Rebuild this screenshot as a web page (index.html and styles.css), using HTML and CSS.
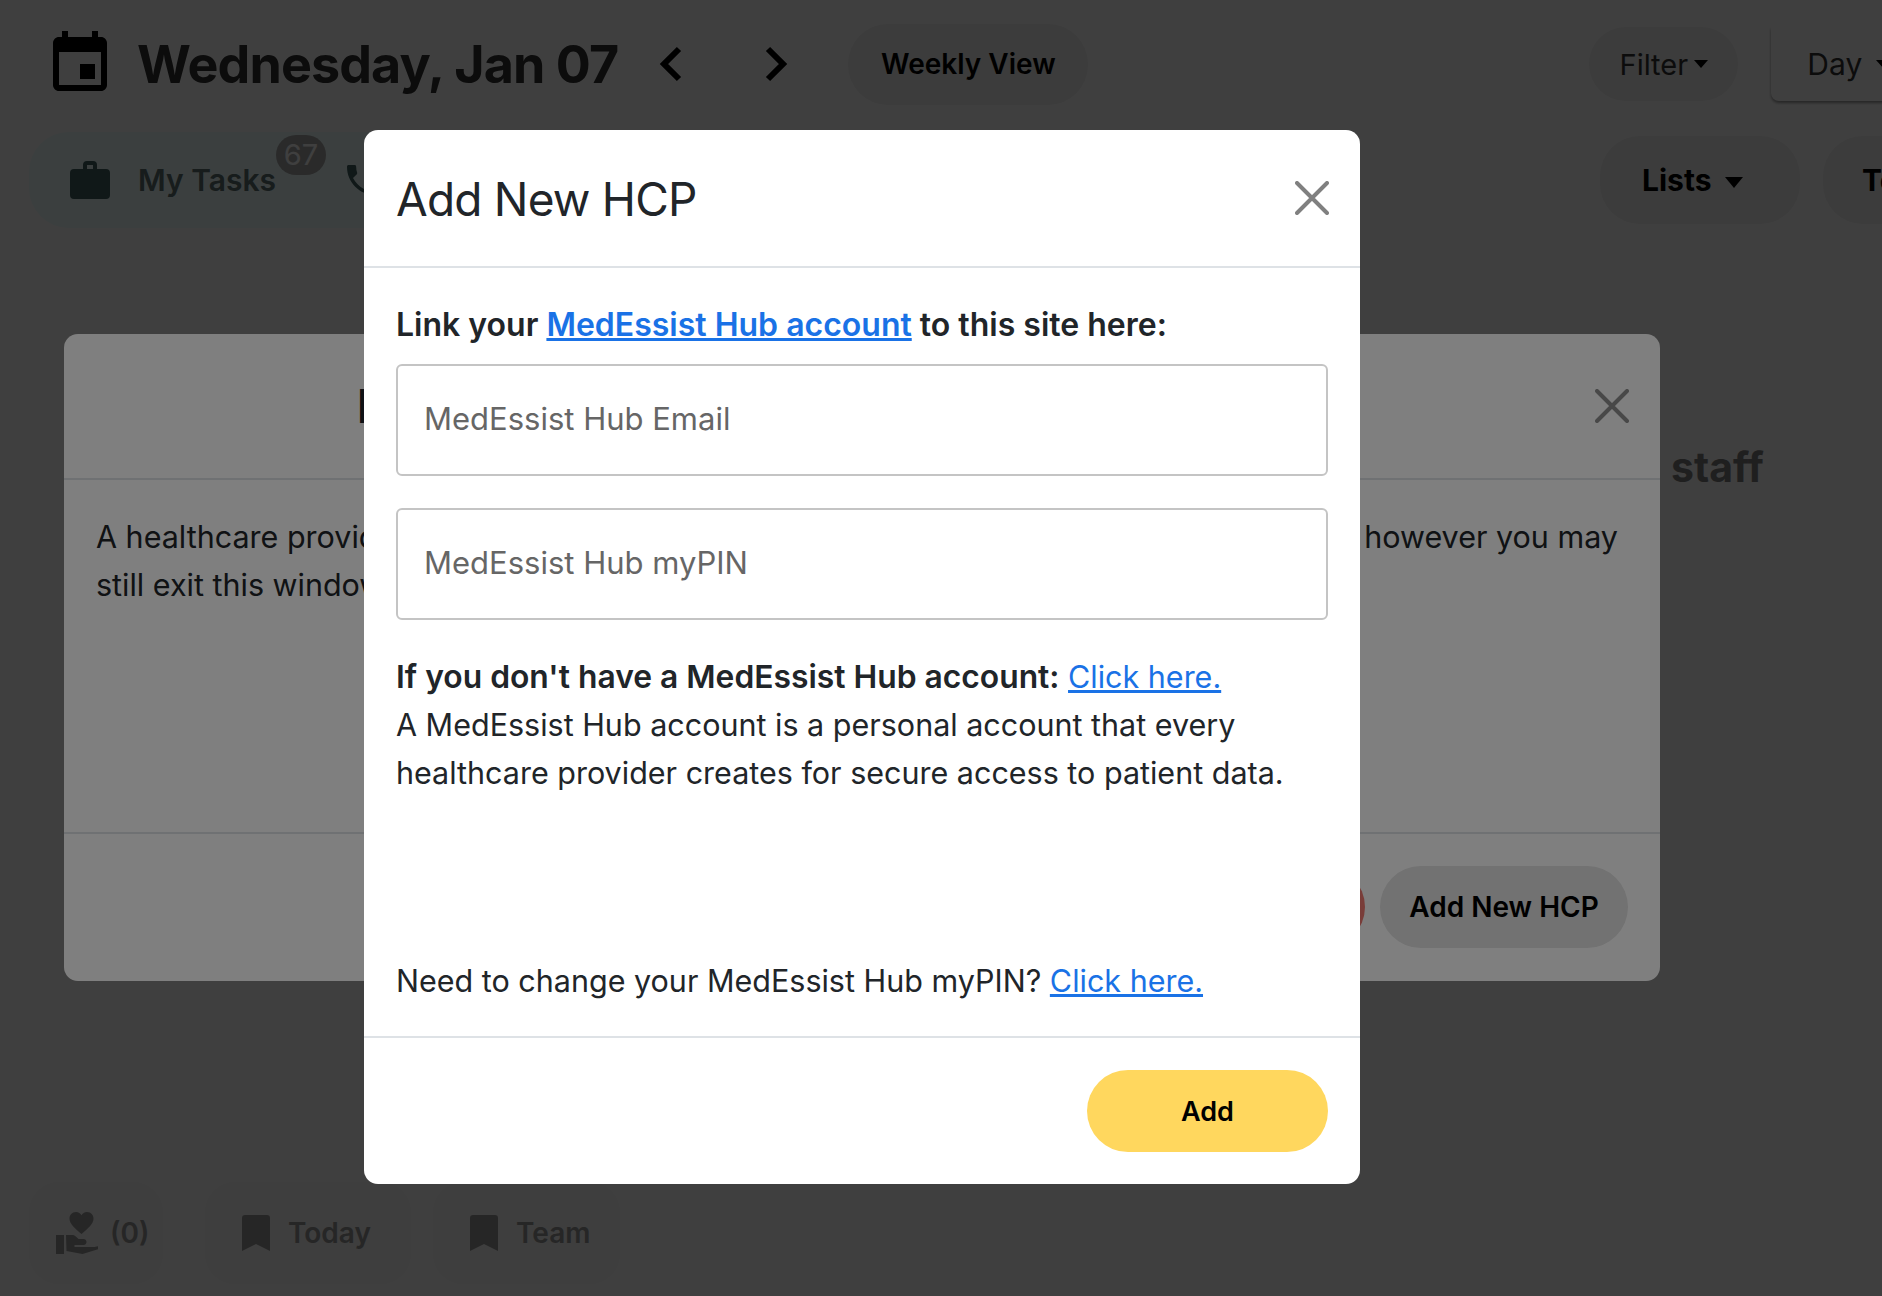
FILE: index.html
```html
<!DOCTYPE html>
<html lang="en">
<head>
    <meta charset="UTF-8">
    <meta name="viewport" content="width=device-width, initial-scale=1.0">
    <title>Add New HCP</title>
    <link rel="stylesheet" href="styles.css">
</head>
<body>

<div class="page">
    <div class="top-row">
        <svg class="cal-icon" viewBox="0 0 24 24"><path d="M17 12h-5v5h5v-5zM16 1v2H8V1H6v2H5c-1.11 0-1.99.9-1.99 2L3 19c0 1.1.89 2 2 2h14c1.1 0 2-.9 2-2V5c0-1.1-.9-2-2-2h-1V1h-2zm3 18H5V8h14v11z"/></svg>
        <h1 class="date">Wednesday, Jan 07</h1>
        <svg class="chev chev-prev" viewBox="0 0 24 36"><polyline points="20,3 5,18 20,33"/></svg>
        <svg class="chev chev-next" viewBox="0 0 24 36"><polyline points="4,3 19,18 4,33"/></svg>
        <button class="pill weekly">Weekly View</button>
        <button class="pill filter">Filter<span class="caret caret-sm"></span></button>
        <button class="day">Day<span class="caret caret-sm"></span></button>
    </div>

    <div class="tab-row">
        <div class="tabs">
            <svg class="case-icon" viewBox="0 0 40 38"><path d="M13 8V4a4 4 0 0 1 4-4h6a4 4 0 0 1 4 4v4h9a4 4 0 0 1 4 4v22a4 4 0 0 1-4 4H4a4 4 0 0 1-4-4V12a4 4 0 0 1 4-4zm4 0h6V4h-6z"/></svg>
            <span class="tab-label">My Tasks</span>
            <span class="count">67</span>
            <svg class="phone-icon" viewBox="0 0 24 24"><path d="M6.6 10.8c1.4 2.8 3.8 5.1 6.6 6.6l2.2-2.2c.3-.3.7-.4 1-.2 1.1.4 2.3.6 3.6.6.6 0 1 .4 1 1V20c0 .6-.4 1-1 1C10.6 21 3 13.4 3 4c0-.6.4-1 1-1h3.5c.6 0 1 .4 1 1 0 1.300.2 2.500.6 3.600.1.300 0 .7-.2 1z"/></svg>
        </div>
        <button class="pill lists">Lists<span class="caret"></span></button>
        <button class="pill team-btn">Team</button>
    </div>

    <div class="staff-row">staff</div>

    <div class="bottom-row">
        <div class="chip chip-care">
            <svg class="care-icon" viewBox="0 0 42 42"><path d="M31 0c-2.600 0-4.500 1.300-5.500 3.200C24.500 1.300 22.600 0 20 0c-4 0-6.500 3-6.500 6.700 0 5 5.500 9.800 12 15.300 6.500-5.500 12-10.300 12-15.300C37.500 3 35 0 31 0zM0 23h8v19H0zM10 23h6c1.500 0 2.500.5 3.500 1.300l3 2.700h5c2 0 3 1.500 3 3s-1 3-3 3h-9v2h20l4-1v3l-16 5-16-3z"/></svg>
            <span>(0)</span>
        </div>
        <div class="chip chip-today">
            <svg class="mark-icon" viewBox="0 0 28 36"><path d="M3 0h22a3 3 0 0 1 3 3v33L14 29 0 36V3a3 3 0 0 1 3-3z"/></svg>
            <span>Today</span>
        </div>
        <div class="chip chip-team">
            <svg class="mark-icon" viewBox="0 0 28 36"><path d="M3 0h22a3 3 0 0 1 3 3v33L14 29 0 36V3a3 3 0 0 1 3-3z"/></svg>
            <span>Team</span>
        </div>
    </div>
</div>

<div class="backdrop"></div>

<div class="modal modal-back">
    <div class="modal-top">
        <h2 class="back-title">Important</h2>
        <svg class="close close-back" viewBox="0 0 34 34"><path d="M2 2l30 30M32 2L2 32"/></svg>
    </div>
    <div class="back-body">
        <div class="back-line"><span>A healthcare provider</span><span>however you may</span></div>
        <div class="back-line"><span>still exit this window</span></div>
    </div>
    <div class="back-foot">
        <button class="btn-red">Exit</button>
        <button class="btn-grey">Add New HCP</button>
    </div>
</div>

<div class="backdrop"></div>

<div class="modal modal-front">
    <div class="front-head">
        <h2 class="front-title">Add New HCP</h2>
        <svg class="close close-front" viewBox="0 0 34 34"><path d="M2 2l30 30M32 2L2 32"/></svg>
    </div>
    <div class="front-body">
        <p class="link-line">Link your <a href="#">MedEssist Hub account</a> to this site here:</p>
        <input class="field" type="text" placeholder="MedEssist Hub Email">
        <input class="field" type="text" placeholder="MedEssist Hub myPIN">
        <p class="info"><b>If you don't have a MedEssist Hub account:</b> <a href="#">Click here.</a><br>
        A MedEssist Hub account is a personal account that every<br>
        healthcare provider creates for secure access to patient data.</p>
        <p class="change">Need to change your MedEssist Hub myPIN? <a href="#">Click here.</a></p>
    </div>
    <div class="front-foot">
        <button class="btn-add">Add</button>
    </div>
</div>

</body>
</html>
```

FILE: styles.css
```css
* {
    box-sizing: border-box;
}
html, body {
    margin: 0;
    height: 100%;
}
body {
    font-family: Inter, "Liberation Sans", sans-serif;
    color: #212529;
    background-color: #fff;
    overflow: hidden;
}
button {
    font-family: inherit;
    border: none;
    cursor: pointer;
}
.page {
    height: 1296px;
    display: flex;
    flex-direction: column;
    width: 2000px;
}
.top-row {
    display: flex;
    align-items: center;
    height: 128px;
    padding-left: 44px;
}
.cal-icon {
    width: 72px;
    height: 72px;
    fill: #000;
}
.date {
    margin: 0 0 0 21px;
    font-size: 52px;
    font-weight: 700;
    letter-spacing: -0.9px;
    color: #333;
    white-space: nowrap;
}
.chev {
    width: 24px;
    height: 36px;
    fill: none;
    stroke: #000;
    stroke-width: 6;
}
.chev-prev {
    margin-left: 41px;
}
.chev-next {
    margin-left: 81px;
}
.pill {
    background-color: #f1f1f1;
    color: #000;
    border-radius: 40px;
    font-weight: 600;
    white-space: nowrap;
}
.weekly {
    width: 240px;
    height: 81px;
    margin-left: 60px;
    font-size: 28px;
}
.filter {
    width: 149px;
    height: 74px;
    margin-left: 501px;
    font-size: 29px;
    font-weight: 400;
    color: #333;
}
.day {
    width: 160px;
    height: 74px;
    margin-left: 33px;
    padding: 0 0 0 36px;
    font-size: 30px;
    text-align: left;
    background-color: #fff;
    color: #333;
    border-radius: 0 0 0 8px;
    box-shadow: 0 2px 3px rgba(0, 0, 0, 0.4);
}
.day .caret {
    margin-left: 14px;
}
.caret {
    display: inline-block;
    margin-left: 14px;
    vertical-align: middle;
    border-top: 11px solid #000;
    border-left: 9px solid transparent;
    border-right: 9px solid transparent;
}
.caret-sm {
    margin-left: 6px;
    margin-top: -6px;
    border-top-width: 8px;
    border-left-width: 7px;
    border-right-width: 7px;
}
.tab-row {
    display: flex;
    align-items: center;
    height: 96px;
    margin-top: 4px;
    padding-left: 29px;
}
.tabs {
    display: flex;
    align-items: center;
    width: 400px;
    height: 96px;
    padding-left: 41px;
    border-radius: 40px;
    background-color: #ecffff;
}
.case-icon {
    width: 40px;
    height: 38px;
    fill: #406060;
}
.tab-label {
    margin-left: 28px;
    font-size: 30px;
    font-weight: 600;
    color: #5c7070;
    white-space: nowrap;
}
.count {
    width: 50px;
    height: 40px;
    margin-top: -50px;
    border-radius: 20px;
    background-color: #aaa;
    color: #fff;
    font-size: 29px;
    line-height: 40px;
    text-align: center;
}
.phone-icon {
    width: 40px;
    height: 40px;
    margin-left: 16px;
    fill: #406060;
}
.lists {
    width: 200px;
    height: 88px;
    margin-left: 1171px;
    padding: 0 0 0 42px;
    font-size: 30px;
    font-weight: 700;
    text-align: left;
}
.team-btn {
    width: 140px;
    height: 88px;
    margin-left: 23px;
    padding: 0 0 0 39px;
    font-size: 30px;
    font-weight: 700;
    text-align: left;
}
.staff-row {
    margin: 214px 0 0 1671px;
    font-size: 41px;
    font-weight: 700;
    line-height: 50px;
    color: #7c7c7c;
}
.bottom-row {
    display: flex;
    gap: 22px;
    margin-top: auto;
    margin-bottom: 12px;
    padding-left: 29px;
}
.chip {
    display: flex;
    align-items: center;
    height: 102px;
    border-radius: 30px;
    background-color: #f8f8f8;
    font-size: 28px;
    font-weight: 600;
    color: #999;
}
.chip-care {
    width: 134px;
    padding-left: 27px;
    gap: 12px;
}
.chip-today {
    width: 206px;
    padding-left: 37px;
    gap: 18px;
    margin-left: 20px;
}
.chip-team {
    width: 187px;
    padding-left: 37px;
    gap: 18px;
}
.care-icon {
    width: 42px;
    height: 42px;
    fill: #999;
}
.mark-icon {
    width: 28px;
    height: 36px;
    fill: #999;
}
.backdrop {
    position: absolute;
    top: 0;
    left: 0;
    width: 100%;
    height: 100%;
    background-color: rgba(0, 0, 0, 0.5);
}
.modal {
    position: absolute;
    display: flex;
    flex-direction: column;
    background-color: #fff;
    border-radius: 14px;
}
.modal-back {
    left: 64px;
    top: 334px;
    width: 1596px;
    height: 647px;
}
.modal-top {
    display: flex;
    align-items: center;
    justify-content: space-between;
    height: 146px;
    padding: 0 31px 0 292px;
    border-bottom: 2px solid #dee2e6;
}
.back-title {
    margin: 0;
    font-size: 46px;
    font-weight: 400;
}
.close {
    fill: none;
    stroke-linecap: round;
}
.close-back {
    width: 34px;
    height: 34px;
    stroke: #909090;
    stroke-width: 4;
}
.back-body {
    flex: 1;
    padding: 33px 42px 0 32px;
    font-size: 30.5px;
    line-height: 48px;
}
.back-line {
    display: flex;
    justify-content: space-between;
}
.back-foot {
    display: flex;
    justify-content: flex-end;
    align-items: center;
    gap: 15px;
    height: 149px;
    padding: 0 32px 2px 0;
    border-top: 2px solid #dee2e6;
}
.btn-red {
    width: 200px;
    height: 82px;
    border-radius: 41px;
    background-color: #f27a72;
    color: #000;
    font-size: 26px;
    font-weight: 600;
}
.btn-grey {
    width: 248px;
    height: 82px;
    border-radius: 41px;
    background-color: #e4e4e4;
    color: #000;
    font-size: 28px;
    font-weight: 600;
}
.modal-front {
    left: 364px;
    top: 130px;
    width: 996px;
    height: 1054px;
}
.front-head {
    display: flex;
    align-items: center;
    justify-content: space-between;
    height: 138px;
    padding: 0 31px 0 32px;
    border-bottom: 2px solid #dee2e6;
}
.front-title {
    margin: 2px 0 0;
    font-size: 46px;
    font-weight: 400;
    letter-spacing: -0.8px;
}
.close-front {
    width: 34px;
    height: 34px;
    stroke: #808080;
    stroke-width: 4;
}
.front-body {
    flex: 1;
    display: flex;
    flex-direction: column;
    padding: 33px 32px 0;
    font-size: 30.5px;
    line-height: 48px;
}
.front-body p {
    margin: 0;
}
.front-body a {
    color: #1a72e6;
}
.link-line {
    font-size: 32px;
    font-weight: 600;
}
.field {
    flex: none;
    width: 100%;
    height: 112px;
    margin-top: 15px;
    padding: 0 26px 4px;
    border: 2px solid #c4c4c4;
    border-radius: 6px;
    font-family: inherit;
    font-size: 31px;
    color: #212529;
}
.field + .field {
    margin-top: 32px;
}
.field::placeholder {
    color: #666;
}
.front-body .info {
    margin-top: 33px;
}
.info b {
    font-size: 31.8px;
    font-weight: 600;
}
.front-body .change {
    margin-top: auto;
    margin-bottom: 31px;
}
.front-foot {
    display: flex;
    justify-content: flex-end;
    align-items: center;
    height: 148px;
    padding-right: 32px;
    border-top: 2px solid #dee2e6;
}
.btn-add {
    width: 241px;
    height: 82px;
    border-radius: 41px;
    background-color: #ffd75e;
    color: #000;
    font-size: 27px;
    font-weight: 600;
}
```
